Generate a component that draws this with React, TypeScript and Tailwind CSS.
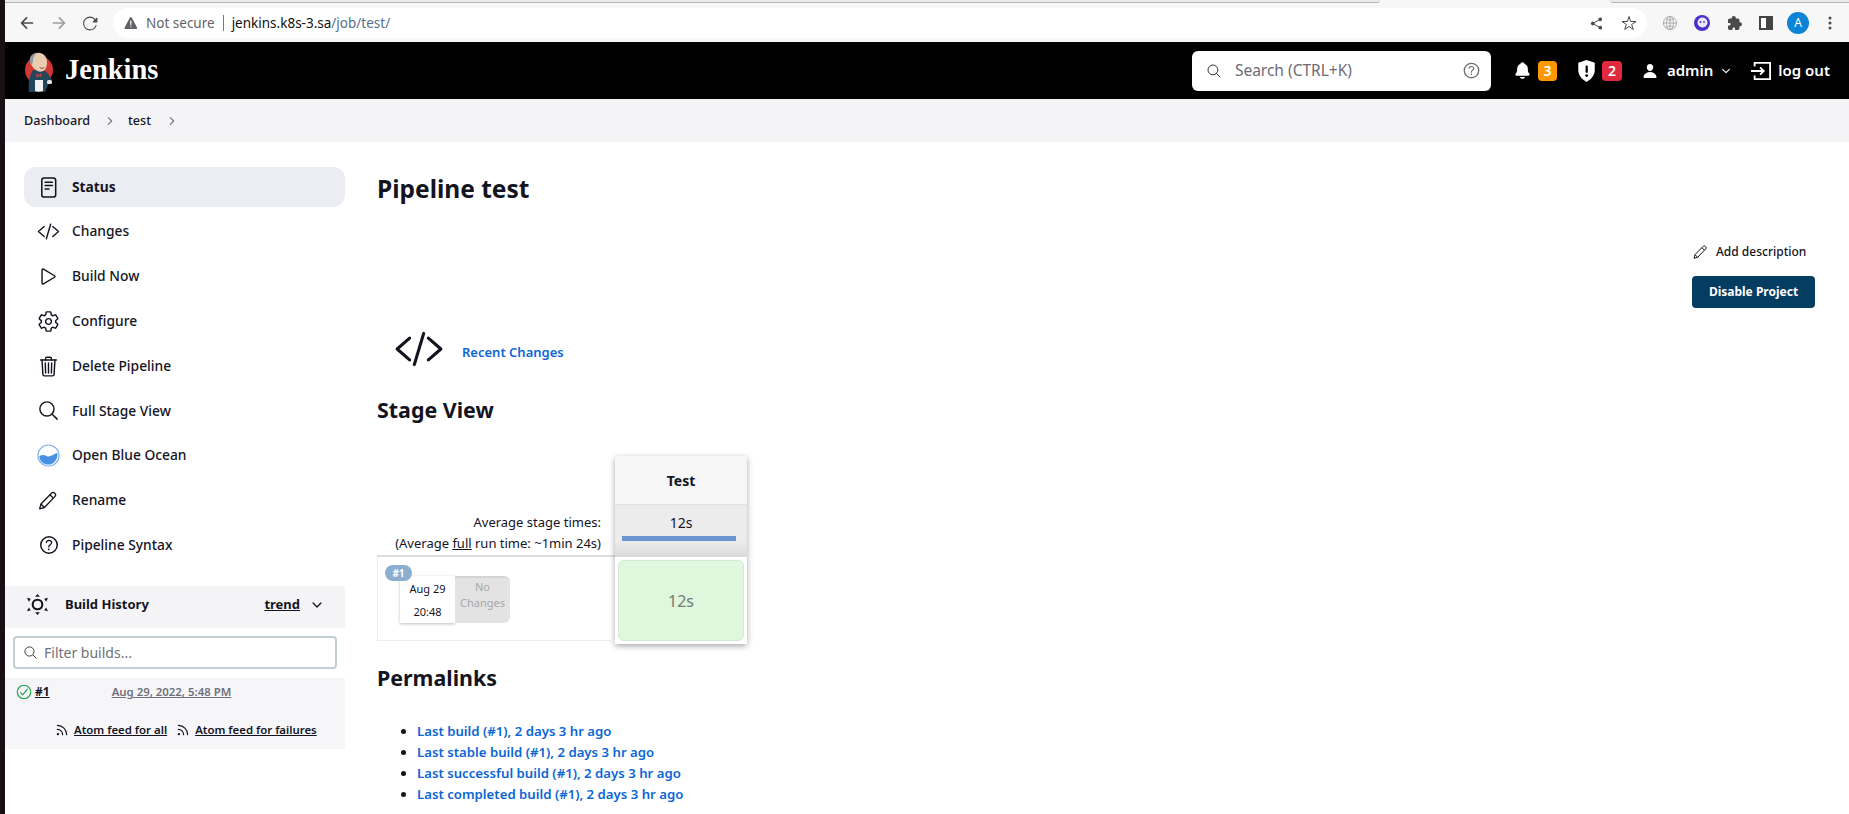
import {
  IoArrowBack,
  IoArrowForward,
  IoCheckmarkCircleOutline,
  IoChevronDown,
  IoChevronForward,
  IoCodeSlashOutline,
  IoHelpCircleOutline,
  IoNotifications,
  IoPerson,
  IoPlayOutline,
  IoReload,
  IoSearchOutline,
  IoSettingsOutline,
  IoShareSocial,
  IoStarOutline,
  IoTrashOutline,
  IoExtensionPuzzle,
  IoEllipsisVertical,
  IoGlobeOutline,
  IoWarning,
} from 'react-icons/io5'
import { Rss } from 'lucide-react'

function JenkinsLogo() {
  return (
    <svg viewBox="0 0 50 52" className="w-[50px] h-[52px] shrink-0">
      <circle cx="24" cy="25" r="14" fill="#d33833" />
      <path d="M14 47c-1-8 0-16 4-22l12 1c4 3 6 7 7 10l-4 4-3 7z" fill="#24465c" />
      <path d="M15 15c0-5 5-8 10-7 5 1 7 5 7 9 0 4-1 8-4 9-2 1-5 1-7-1-3-2-6-6-6-10z" fill="#e9cdb0" />
      <path d="M15 16c0-5 3-8 7-8-3 2-4 5-4 8l-1 4c-1-1-2-2-2-4z" fill="#8d9aa3" />
      <path d="M24 22c2 1 4 1 6 0-1 2-4 3-6 0z" fill="#9a5a4a" />
      <path d="M21 28l3 2 3-2-1 4-2-1-2 2z" fill="#d33833" />
      <path d="M20 35h8v11c-3 1-6 1-8 0z" fill="#f2f2f2" />
      <rect x="32" y="35" width="5" height="4" rx="1.5" fill="#e9e4dc" />
    </svg>
  )
}

function BlueOcean() {
  return (
    <svg viewBox="0 0 24 24" className="w-[23px] h-[23px]">
      <circle cx="12" cy="12" r="11" fill="white" stroke="#7fb0f0" strokeWidth="1.2" />
      <path d="M2.5 12.5c3-1.5 5.5-1 8 .2 3 1.3 7-2.5 10.8-3.7.8 7-4 12.5-9.3 12.5-5 0-9.5-3.5-9.5-9z" fill="#4a90e2" />
    </svg>
  )
}

function BuildHistoryIcon() {
  return (
    <svg viewBox="0 0 24 24" className="w-[23px] h-[23px] text-[#14141f]">
      <circle cx="12" cy="12" r="5" fill="none" stroke="currentColor" strokeWidth="2.2" />
      <path d="M12 1l2.5 3h-5zM12 23l2.5-3h-5zM1 5l4 1-2 3zM23 5l-4 1 2 3zM1 19l4-1-2-3zM23 19l-4-1 2-3z" fill="currentColor" />
    </svg>
  )
}

function StatusIcon() {
  return (
    <svg viewBox="0 0 24 24" className="w-[23px] h-[23px]" fill="none" stroke="currentColor" strokeWidth="1.6" strokeLinecap="round">
      <rect x="5" y="2" width="14.5" height="20" rx="2.5" />
      <path d="M8.5 6.5h7.5M8.5 10h7.5M8.5 13.5h4" />
    </svg>
  )
}

function PencilIcon({ className }: { className: string }) {
  return (
    <svg viewBox="0 0 24 24" className={className} fill="none" stroke="currentColor" strokeWidth="1.5" strokeLinejoin="round">
      <path d="M3 21.5l1.5-5.5L16.8 3.5a2.2 2.2 0 0 1 3.2 0l.6.6a2.2 2.2 0 0 1 0 3.2L8.5 20z" />
      <path d="M14.8 5.5l3.8 3.8M4.5 16l4 4" />
    </svg>
  )
}

const tasks = [
  { label: 'Status', icon: <StatusIcon />, active: true },
  { label: 'Changes', icon: <IoCodeSlashOutline className="w-[23px] h-[23px]" /> },
  { label: 'Build Now', icon: <IoPlayOutline className="w-[23px] h-[23px]" /> },
  { label: 'Configure', icon: <IoSettingsOutline className="w-[23px] h-[23px]" /> },
  { label: 'Delete Pipeline', icon: <IoTrashOutline className="w-[23px] h-[23px]" /> },
  { label: 'Full Stage View', icon: <IoSearchOutline className="w-[23px] h-[23px]" /> },
  { label: 'Open Blue Ocean', icon: <BlueOcean /> },
  { label: 'Rename', icon: <PencilIcon className="w-[21px] h-[21px]" /> },
  { label: 'Pipeline Syntax', icon: <IoHelpCircleOutline className="w-[24px] h-[24px]" /> },
]

const permalinks = [
  'Last build (#1), 2 days 3 hr ago',
  'Last stable build (#1), 2 days 3 hr ago',
  'Last successful build (#1), 2 days 3 hr ago',
  'Last completed build (#1), 2 days 3 hr ago',
]

function BrowserBar() {
  return (
    <div className="h-[42px] bg-[#f7f7f7] relative flex items-center text-[#4a4a4a] shrink-0">
      <div className="absolute top-0 left-0 w-[1375px] h-[3px] bg-[#ebebeb] border-b border-[#b5b5b5] rounded-br-md" />
      <div className="absolute top-0 left-[1605px] right-0 h-[3px] bg-[#ebebeb] border-b border-[#b5b5b5] rounded-bl-md" />
      <IoArrowBack className="ml-[13px] w-[18px] h-[18px] mt-[4px]" />
      <IoArrowForward className="ml-[14px] w-[18px] h-[18px] mt-[4px] text-[#9c9c9c]" />
      <IoReload className="ml-[14px] w-[17px] h-[17px] mt-[4px]" />
      <div className="ml-[14px] w-[1534px] h-[30px] mt-[4px] bg-white rounded-full flex items-center pl-[10px]">
        <IoWarning className="w-[16px] h-[16px] text-[#5f6368]" />
        <span className="ml-[7px] text-[13.5px] text-[#5f6368]">Not secure</span>
        <span className="ml-[8px] w-px h-[16px] bg-[#777]" />
        <span className="ml-[8px] text-[13.5px] text-[#111]">jenkins.k8s-3.sa</span>
        <span className="text-[13.5px] text-[#56708c]">/job/test/</span>
        <div className="ml-auto mr-[10px] flex items-center gap-[17px]">
          <IoShareSocial className="w-[15px] h-[15px]" />
          <IoStarOutline className="w-[16px] h-[16px]" />
        </div>
      </div>
      <IoGlobeOutline className="ml-[15px] w-[16px] h-[16px] mt-[4px] text-[#aaa]" />
      <svg viewBox="0 0 16 16" className="ml-[16px] w-[16px] h-[16px] mt-[4px]">
        <circle cx="8" cy="8" r="8" fill="#4b2fc9" />
        <circle cx="8.5" cy="7.5" r="5" fill="#ece9fb" />
        <circle cx="6.5" cy="7" r="0.9" fill="#4b2fc9" />
        <circle cx="10" cy="7" r="0.9" fill="#4b2fc9" />
      </svg>
      <IoExtensionPuzzle className="ml-[17px] w-[16px] h-[16px] mt-[4px]" />
      <div className="ml-[16px] w-[14px] h-[14px] mt-[4px] border-[2px] border-[#444] border-r-[7px] bg-white" />
      <div className="ml-[14px] w-[22px] h-[22px] mt-[4px] rounded-full bg-[#0b84d8] text-white text-[12px] flex items-center justify-center">A</div>
      <IoEllipsisVertical className="ml-[13px] w-[16px] h-[16px] mt-[4px]" />
    </div>
  )
}

function Header() {
  return (
    <div className="h-[57px] bg-black text-white flex items-center shrink-0">
      <div className="ml-[10px]"><JenkinsLogo /></div>
      <span className="text-[28.5px] font-bold font-['Liberation_Serif',serif]">Jenkins</span>
      <div className="ml-auto w-[299px] h-[40px] bg-white rounded-md flex items-center px-[14px] text-[#6c6c76]">
        <IoSearchOutline className="w-[16px] h-[16px] text-[#333]" />
        <span className="ml-[13px] text-[15.5px]">Search (CTRL+K)</span>
        <IoHelpCircleOutline className="ml-auto w-[21px] h-[21px] -mr-[5px]" />
      </div>
      <IoNotifications className="ml-[22px] w-[19px] h-[19px]" />
      <span className="ml-[6px] w-[19px] h-[20px] rounded-sm bg-[#fe9800] flex items-center justify-center text-[14px] font-semibold">3</span>
      <svg viewBox="0 0 20 24" className="ml-[20px] w-[19px] h-[22px]">
        <path d="M10 0l9 3v8c0 6-4 10-9 13C5 21 1 17 1 11V3z" fill="white" />
        <rect x="9" y="6" width="2.4" height="8" rx="1" fill="black" />
        <circle cx="10.2" cy="17" r="1.5" fill="black" />
      </svg>
      <span className="ml-[6px] w-[20px] h-[20px] rounded-sm bg-[#e0293e] flex items-center justify-center text-[14px] font-semibold">2</span>
      <IoPerson className="ml-[20px] w-[16px] h-[18px]" />
      <span className="ml-[9px] text-[15px] font-semibold">admin</span>
      <IoChevronDown className="ml-[7px] w-[12px] h-[12px]" />
      <svg viewBox="0 0 22 22" className="ml-[18px] w-[22px] h-[20px]" fill="none" stroke="white" strokeWidth="2">
        <path d="M4 6V2h17v18H4v-4" />
        <path d="M0 11h14M10 7l4 4-4 4" />
      </svg>
      <span className="ml-[6px] mr-[19px] text-[15px] font-semibold">log out</span>
    </div>
  )
}

function Breadcrumb() {
  return (
    <div className="h-[43px] bg-[#f4f4f6] flex items-center pl-[19px] pt-[1px] text-[12.6px] text-[#14141f] font-medium shrink-0">
      <span>Dashboard</span>
      <IoChevronForward className="ml-[14px] w-[12px] h-[12px] text-[#777]" />
      <span className="ml-[12px]">test</span>
      <IoChevronForward className="ml-[15px] w-[12px] h-[12px] text-[#777]" />
    </div>
  )
}

function Sidebar() {
  return (
    <aside className="w-[340px] pt-[25px] shrink-0 text-[#14141f]">
      <div className="ml-[19px] flex flex-col gap-[4.8px]">
        {tasks.map((item) => (
          <div
            key={item.label}
            className={`h-[40px] rounded-xl flex items-center pl-[13px] text-[13.8px] ${item.active ? 'bg-[#ecedf2] font-bold' : 'font-medium'}`}
          >
            <span className="w-[35px] flex">{item.icon}</span>
            <span>{item.label}</span>
          </div>
        ))}
      </div>

      <div className="mt-[20.6px] h-[42px] bg-[#f4f4f6] flex items-center pl-[21px] pr-[21px] pb-[4px]">
        <BuildHistoryIcon />
        <span className="ml-[16px] text-[13px] font-bold">Build History</span>
        <span className="ml-auto text-[13px] font-bold underline">trend</span>
        <IoChevronDown className="ml-[10px] w-[14px] h-[14px]" />
      </div>

      <div className="mx-[8px] mt-[8px] h-[33px] rounded border-2 border-[#c3ced2] flex items-center px-[8px] text-[#70707a]">
        <IoSearchOutline className="w-[15px] h-[15px] text-[#333]" />
        <span className="ml-[6px] text-[14px]">Filter builds...</span>
      </div>

      <div className="mt-[9px] h-[71px] bg-[#f6f6f8]">
        <div className="h-[28px] flex items-center pl-[10px] text-[11.4px]">
          <IoCheckmarkCircleOutline className="w-[18px] h-[18px] text-[#1ea64b]" />
          <span className="ml-[2px] text-[12px] font-bold underline">#1</span>
          <span className="ml-[62px] font-semibold underline text-[#70707a]">Aug 29, 2022, 5:48 PM</span>
        </div>
        <div className="mt-[15px] flex items-center pl-[50px] text-[11.4px] font-semibold underline">
          <Rss className="w-[14px] h-[14px]" />
          <span className="ml-[5px]">Atom feed for all</span>
          <Rss className="ml-[9px] w-[14px] h-[14px]" />
          <span className="ml-[5px]">Atom feed for failures</span>
        </div>
      </div>
    </aside>
  )
}

function StageView() {
  return (
    <div className="mt-[32px] flex w-[370px] h-[188px] text-[#14141f]">
      <div className="w-[238px] flex flex-col">
        <div className="h-[101px] pr-[14px] flex flex-col justify-end items-end text-[13px] leading-[21px] pb-[1px] border-b-2 border-[#dedede]">
          <div>Average stage times:</div>
          <div>(Average <span className="underline">full</span> run time: ~1min 24s)</div>
        </div>
        <div className="relative h-[84px] border-x border-b border-[#eeeeee] border-r-0">
          <span className="absolute left-[7px] top-[8px] z-10 w-[27px] h-[16px] rounded-full bg-[#8badcf] text-white text-[10px] font-bold flex items-center justify-center">#1</span>
          <div className="absolute left-[22px] top-[19px] flex h-[47px]">
            <div className="w-[55px] bg-white shadow-[0_1px_3px_rgba(0,0,0,0.25)] flex flex-col items-center justify-between pt-[5px] pb-[3px] text-[11px]">
              <span>Aug 29</span>
              <span>20:48</span>
            </div>
            <div className="w-[55px] bg-[#e3e3e3] rounded-r-md border-t-2 border-[#d4d4d4] text-[#a8a8a8] text-[11px] leading-[16px] text-center pt-[1px]">
              No<br />Changes
            </div>
          </div>
        </div>
      </div>
      <div className="w-[132px] h-[188px] flex flex-col shadow-[0_2px_6px_rgba(0,0,0,0.35)]">
        <div className="h-[49px] bg-[#f6f6f6] border-b border-[#e2e2e2] flex items-center justify-center text-[14px] font-bold">Test</div>
        <div className="h-[52px] bg-gradient-to-b from-[#ececec] from-70% to-[#d9d9d9] flex flex-col items-center pt-[8px] px-[7px]">
          <span className="text-[14px] leading-[20px]">12s</span>
          <div className="mt-[3px] w-[114px] self-start h-[5px] bg-[#6c94d0]" />
        </div>
        <div className="flex-1 bg-white p-[3px]">
          <div className="h-full rounded-md bg-[#dff7dd] border border-[#d5e8d5] flex items-center justify-center text-[16px] text-[#6f7f72]">12s</div>
        </div>
      </div>
    </div>
  )
}

export default function App() {
  return (
    <div className="flex h-[814px] overflow-hidden bg-white font-['Noto_Sans',sans-serif]">
      <div className="w-[5px] bg-[#1a0f14] shrink-0" />
      <div className="flex-1 flex flex-col min-w-0">
        <BrowserBar />
        <Header />
        <Breadcrumb />
        <div className="flex flex-1">
          <Sidebar />
          <main className="flex-1 flex pl-[32px] pr-[34px] text-[#14141f]">
            <div className="flex-1">
              <h1 className="mt-[31px] text-[24.5px] leading-[32px] font-bold">Pipeline test</h1>
              <div className="mt-[120px] h-[48px] flex items-center pl-[17px]">
                <IoCodeSlashOutline className="w-[50px] h-[50px]" />
                <a className="ml-[18px] pt-[7px] text-[13px] font-semibold text-[#0b66d6]">Recent Changes</a>
              </div>
              <h2 className="mt-[23px] text-[21.4px] leading-[28px] font-bold">Stage View</h2>
              <StageView />
              <h2 className="mt-[20px] text-[21.4px] leading-[28px] font-bold">Permalinks</h2>
              <ul className="mt-[29px] pl-[40px] list-disc text-[13.2px] leading-[21px] font-semibold text-[#0b66d6] marker:text-[#14141f]">
                {permalinks.map((link) => (
                  <li key={link}>{link}</li>
                ))}
              </ul>
            </div>
            <div className="w-[123px] pt-[100px] shrink-0">
              <div className="flex items-center h-[20px] text-[12px] font-medium">
                <PencilIcon className="w-[16px] h-[16px]" />
                <span className="ml-[8px]">Add description</span>
              </div>
              <button className="mt-[14px] w-[123px] h-[32px] rounded bg-[#053d62] text-white text-[12px] font-bold">Disable Project</button>
            </div>
          </main>
        </div>
      </div>
    </div>
  )
}
